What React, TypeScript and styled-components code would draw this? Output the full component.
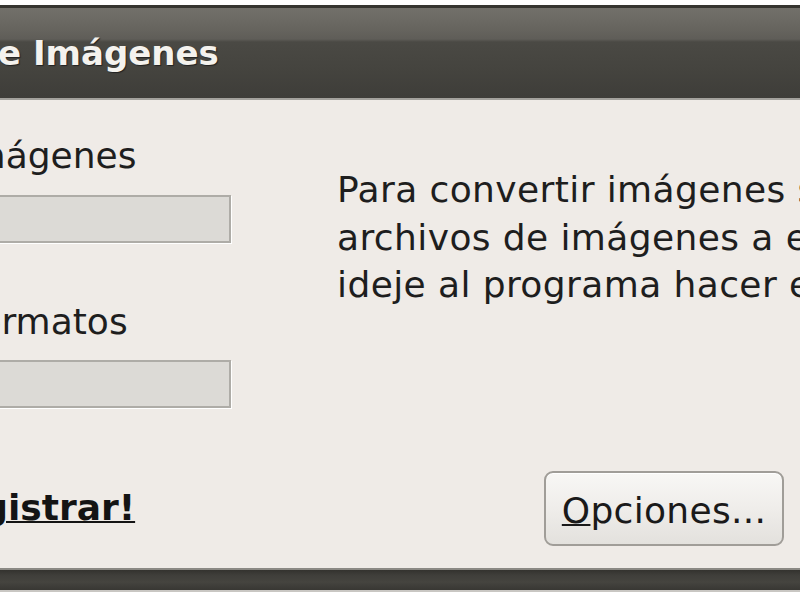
import React from "react";
import styled, { createGlobalStyle } from "styled-components";

const Global = createGlobalStyle`
  html, body {
    margin: 0;
    padding: 0;
    background: #ffffff;
    width: 800px;
    height: 600px;
    overflow: hidden;
  }
  body {
    font-family: "DejaVu Sans", "Liberation Sans", sans-serif;
  }
`;

const Window = styled.div`
  margin-top: 5px;
  margin-left: -250px;
  width: 1300px;
  display: flex;
  flex-direction: column;
  background: #efebe7;
`;

const TitleBar = styled.div`
  height: 90px;
  border-top: 3px solid #35342f;
  border-bottom: 2px solid #a3a19c;
  background: linear-gradient(
    to bottom,
    #72706a 0px,
    #67655f 20px,
    #5f5d58 31px,
    #4a4944 34px,
    #45443f 60px,
    #3e3d39 90px
  );
  display: flex;
  align-items: center;
  padding-left: 17px;
`;

const TitleText = styled.span`
  font-family: "DejaVu Sans", sans-serif;
  font-weight: bold;
  font-size: 34px;
  color: #f4f2ee;
  text-shadow: 1px 1px 1px #222;
  white-space: nowrap;
`;

const Body = styled.div`
  display: grid;
  grid-template-columns: 271px 447px;
  column-gap: 106px;
  padding-left: 210px;
`;

const LeftColumn = styled.div`
  display: flex;
  flex-direction: column;
  padding-top: 32px;
  padding-bottom: 36.5px;
`;

const RightColumn = styled.div`
  display: flex;
  flex-direction: column;
  align-items: flex-start;
  padding-top: 66px;
  padding-bottom: 22px;
`;

const Label = styled.div<{ $gapTop?: number }>`
  font-size: 36px;
  line-height: 47.5px;
  color: #1e1e1e;
  white-space: nowrap;
  margin-top: ${(p) => p.$gapTop ?? 0}px;
  margin-bottom: 15px;
`;

const Field = styled.div`
  height: 44px;
  background: #dcdad6;
  border: 2px solid #aeaca7;
  box-shadow: 1px 1px 0 #ffffff;
`;

const LinkRow = styled.div`
  margin-top: 76px;
  margin-left: -30px;
  font-size: 36px;
  line-height: 47.5px;
`;

const RegisterLink = styled.a`
  font-weight: bold;
  color: #141414;
  text-decoration: underline;
  text-decoration-thickness: 2px;
  white-space: nowrap;
  cursor: pointer;
`;

const Info = styled.p`
  margin: 0;
  font-size: 36px;
  line-height: 47.5px;
  letter-spacing: 0.4px;
  color: #1e1e1e;
  white-space: nowrap;
`;

const Spacer = styled.div`
  flex: 1;
`;

const Button = styled.button`
  align-self: flex-end;
  width: 240px;
  height: 75px;
  border: 2px solid #a09d98;
  border-radius: 9px;
  background: linear-gradient(to bottom, #f8f7f5 0%, #efedea 50%, #e3e1dd 100%);
  box-shadow: inset 0 1px 0 #ffffff;
  font-family: "DejaVu Sans", sans-serif;
  font-size: 36px;
  line-height: 42px;
  letter-spacing: 0.3px;
  color: #1a1a1a;
  padding: 5px 0 0 0;
  display: flex;
  align-items: center;
  justify-content: center;
`;

const Mnemonic = styled.span`
  text-decoration: underline;
  text-decoration-thickness: 2px;
`;

const BottomBar = styled.div`
  height: 20px;
  border-top: 2px solid #8b8984;
  border-bottom: 2px solid #c9c7c3;
  background: linear-gradient(
    to bottom,
    #33322e 0px,
    #3f3e3a 5px,
    #45443f 12px,
    #383733 20px
  );
`;

export default function App() {
  return (
    <>
      <Global />
      <Window>
        <TitleBar>
          <TitleText>Conversor de Imágenes</TitleText>
        </TitleBar>
        <Body>
          <LeftColumn>
            <Label>Imágenes</Label>
            <Field />
            <Label $gapTop={55}>Formatos</Label>
            <Field />
            <LinkRow>
              <RegisterLink>Registrar!</RegisterLink>
            </LinkRow>
          </LeftColumn>
          <RightColumn>
            <Info>
              Para convertir imágenes simplemente arrastre los
              <br />
              archivos de imágenes a esta ventana
              <br />
              ideje al programa hacer el resto!
            </Info>
            <Spacer />
            <Button>
              <span>
                <Mnemonic>O</Mnemonic>pciones...
              </span>
            </Button>
          </RightColumn>
        </Body>
        <BottomBar />
      </Window>
    </>
  );
}
